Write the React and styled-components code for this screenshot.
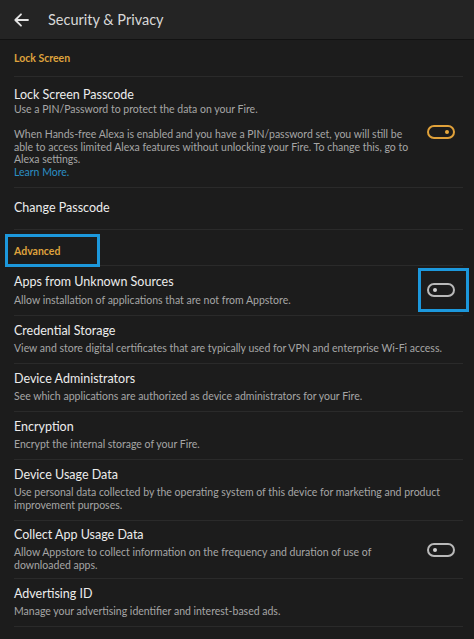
import React from 'react'
import styled, { createGlobalStyle } from 'styled-components'

const Global = createGlobalStyle`
  html, body { margin: 0; padding: 0; background: #1c1c1c; }
  body { font-family: Lato, "Noto Sans", sans-serif; -webkit-font-smoothing: antialiased; }
`

const Page = styled.div`
  width: 474px;
  min-height: 639px;
  background: #1c1c1c;
  color: #e6e6e6;
  overflow: hidden;
`

const Header = styled.header`
  height: 39px;
  display: flex;
  align-items: center;
  background: #242424;
  border-bottom: 1px solid #121212;
  padding-left: 14px;
`

const Title = styled.h1`
  margin: 0 0 0 19px;
  font-size: 14.5px;
  font-weight: 400;
  color: #d8d8d8;
`

const List = styled.div`
  padding: 0 11px 0 14px;
`

const Section = styled.div`
  height: ${p => p.$h}px;
  display: flex;
  align-items: ${p => p.$align || 'center'};
  border-bottom: 1px solid #2a2a2a;
`

const SectionLabel = styled.span`
  font-size: 10.5px;
  font-weight: 700;
  color: #dfa23c;
  ${p => p.$boxed && `
    box-sizing: border-box;
    border: 3px solid #1c98dc;
    margin-left: -9px;
    margin-top: 4px;
    padding: 0 37px 0 6px;
    height: 33px;
    display: flex;
    align-items: center;
    position: relative;
    z-index: 1;
  `}
`

const Row = styled.div`
  display: flex;
  align-items: center;
  gap: 8px;
  padding: ${p => p.$pad || '7px 0 8px'};
  border-bottom: 1px solid #2a2a2a;
`

const Text = styled.div`
  flex: 1;
  min-width: 0;
`

const RowTitle = styled.div`
  font-size: 12.5px;
  line-height: 16px;
  color: #ececec;
`

const Sub = styled.div`
  font-size: 10.5px;
  line-height: ${p => p.$lh || 13}px;
  color: #a6a6a6;
  margin-top: ${p => p.$mt ?? 3}px;
`

const Link = styled.div`
  color: #2b8fc4;
`

const ToggleWrap = styled.div`
  align-self: ${p => p.$top ? 'flex-start' : 'center'};
  margin-top: ${p => p.$top ? '38px' : '0'};
  margin-right: 8px;
  ${p => p.$boxed && `
    border: 3px solid #1c98dc;
    padding: 12px 11px 12px 6px;
    margin-right: -6px;
    margin-top: -4px;
    margin-bottom: -4px;
  `}
`

const Toggle = styled.div`
  width: 28px;
  height: 14px;
  box-sizing: border-box;
  border: 2px solid ${p => p.$on ? '#e0a13a' : '#b9b9b9'};
  border-radius: 8px;
  display: flex;
  align-items: center;
  justify-content: ${p => p.$on ? 'flex-end' : 'flex-start'};
  padding: 0 4px;
  &::after {
    content: '';
    width: 4px;
    height: 4px;
    border-radius: 50%;
    background: ${p => p.$on ? '#e8a83c' : '#cfcfcf'};
  }
`

const items = [
  { title: 'Credential Storage', sub: 'View and store digital certificates that are typically used for VPN and enterprise Wi-Fi access.' },
  { title: 'Device Administrators', sub: 'See which applications are authorized as device administrators for your Fire.' },
  { title: 'Encryption', sub: 'Encrypt the internal storage of your Fire.' },
  { title: 'Device Usage Data', sub: 'Use personal data collected by the operating system of this device for marketing and product improvement purposes.' },
]

export default function App() {
  return (
    <Page>
      <Global />
      <Header>
        <svg width="15" height="14" viewBox="0 0 15 14" fill="none" stroke="#e4e4e4" strokeWidth="1.8" strokeLinecap="round" strokeLinejoin="round">
          <path d="M14 7H1.5M7 1.3L1.3 7L7 12.7" />
        </svg>
        <Title>Security &amp; Privacy</Title>
      </Header>
      <List>
        <Section $h={36}>
          <SectionLabel>Lock Screen</SectionLabel>
        </Section>
        <Row $pad="10px 0 9px">
          <Text>
            <RowTitle>Lock Screen Passcode</RowTitle>
            <Sub $mt={0}>Use a PIN/Password to protect the data on your Fire.</Sub>
            <Sub $mt={12} $lh={12.5} style={{ paddingRight: 6 }}>
              When Hands-free Alexa is enabled and you have a PIN/password set, you will still be able to access limited Alexa features without unlocking your Fire. To change this, go to Alexa settings.
              <Link>Learn More.</Link>
            </Sub>
          </Text>
          <ToggleWrap $top>
            <Toggle $on />
          </ToggleWrap>
        </Row>
        <Row $pad="12px 0 13px">
          <Text>
            <RowTitle>Change Passcode</RowTitle>
          </Text>
        </Row>
        <Section $h={35} $align="flex-start">
          <SectionLabel $boxed>Advanced</SectionLabel>
        </Section>
        <Row $pad="6px 0 7px">
          <Text>
            <RowTitle>Apps from Unknown Sources</RowTitle>
            <Sub $mt={4}>Allow installation of applications that are not from Appstore.</Sub>
          </Text>
          <ToggleWrap $boxed>
            <Toggle />
          </ToggleWrap>
        </Row>
        {items.map(it => (
          <Row key={it.title}>
            <Text>
              <RowTitle>{it.title}</RowTitle>
              <Sub>{it.sub}</Sub>
            </Text>
          </Row>
        ))}
        <Row $pad="6px 0 6px">
          <Text>
            <RowTitle>Collect App Usage Data</RowTitle>
            <Sub>Allow Appstore to collect information on the frequency and duration of use of downloaded apps.</Sub>
          </Text>
          <ToggleWrap>
            <Toggle />
          </ToggleWrap>
        </Row>
        <Row>
          <Text>
            <RowTitle>Advertising ID</RowTitle>
            <Sub>Manage your advertising identifier and interest-based ads.</Sub>
          </Text>
        </Row>
      </List>
    </Page>
  )
}
